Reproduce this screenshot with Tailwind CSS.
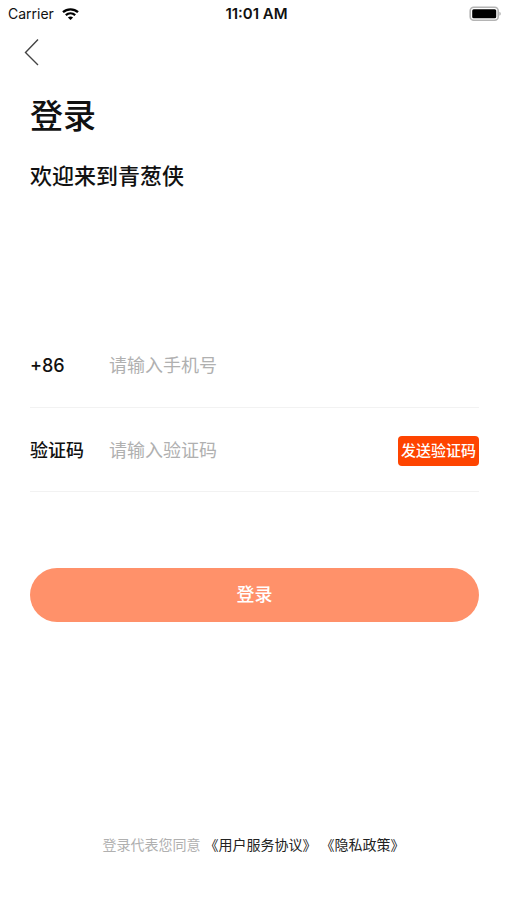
<!DOCTYPE html>
<html lang="zh-CN">
<head>
  <meta charset="UTF-8" />
  <meta name="viewport" content="width=device-width, initial-scale=1.0" />
  <title>登录</title>
  <script src="https://cdn.jsdelivr.net/npm/@tailwindcss/browser@4"></script>
</head>
<body class="bg-white text-[#111111] font-['Inter','Noto_Sans_CJK_SC',sans-serif]">
  <div class="min-h-screen flex flex-col">

    <!-- 状态栏 -->
    <div class="grid grid-cols-3 items-center h-7 pl-2 pr-1.5 text-sm">
      <div class="flex items-center gap-2">
        <span>Carrier</span>
        <svg class="w-[17px] h-3" viewBox="0 0 17 12" fill="none" stroke="#000" stroke-width="2.3">
          <path d="M1 4.2C5.2 .3 11.8 .3 16 4.2" />
          <path d="M3.8 7.2C6.5 4.8 10.5 4.8 13.2 7.2" />
          <path d="M8.5 12L5.9 9.4C7.4 8.1 9.6 8.1 11.1 9.4Z" fill="#000" stroke="none" />
        </svg>
      </div>
      <span class="text-center text-[15px] font-semibold pl-1">11:01 AM</span>
      <svg class="justify-self-end w-8 h-4" viewBox="0 0 32 16">
        <rect x="1.2" y="1.2" width="28" height="13" rx="3.5" fill="#fff" stroke="#b4b4b4" stroke-width="1.6" />
        <rect x="3.2" y="3.2" width="24" height="9" rx="1.5" fill="#000" />
        <path d="M30.5 5.7V9.7C32 9 32 6.4 30.5 5.7Z" fill="#999" />
      </svg>
    </div>

    <!-- 返回 -->
    <header class="h-12 px-6 flex items-center">
      <button type="button" aria-label="返回">
        <svg class="w-4 h-7" viewBox="0 0 16 28" fill="none" stroke="#444" stroke-width="1.4">
          <path d="M14 1.5L1.5 14.5L14 27" />
        </svg>
      </button>
    </header>

    <main class="pl-[30px] pr-7 pt-4">
      <h1 class="text-[33px] leading-12 font-medium">登录</h1>
      <p class="mt-5 text-[22px] leading-8 font-medium">欢迎来到青葱侠</p>

      <form class="mt-[131px] text-lg">
        <div class="flex items-center h-[85px] pt-0.5 border-b border-[#f2f2f2]">
          <label for="phone" class="w-[79px] font-medium">+86</label>
          <input id="phone" type="tel" placeholder="请输入手机号" class="flex-1 min-w-0 outline-none placeholder:text-[#b0b0b0]" />
        </div>
        <div class="flex items-center h-[84px] pt-0.5 border-b border-[#f2f2f2]">
          <label for="code" class="w-[79px] font-medium">验证码</label>
          <input id="code" type="text" placeholder="请输入验证码" class="flex-1 min-w-0 outline-none placeholder:text-[#b0b0b0]" />
          <button type="button" class="h-[30px] px-[3px] rounded bg-[#fe4400] text-white text-[15px] font-medium">发送验证码</button>
        </div>
        <button type="submit" class="mt-[76px] w-full h-[54px] rounded-full bg-[#ff916a] text-white font-medium">登录</button>
      </form>
    </main>

    <!-- 协议 -->
    <footer class="mt-auto pb-[43px] flex justify-center gap-1 text-sm leading-6 text-[#b0b0b0]">
      <span>登录代表您同意</span>
      <a href="#" class="text-[#222222]">《用户服务协议》</a>
      <a href="#" class="text-[#222222]">《隐私政策》</a>
    </footer>
  </div>
</body>
</html>
